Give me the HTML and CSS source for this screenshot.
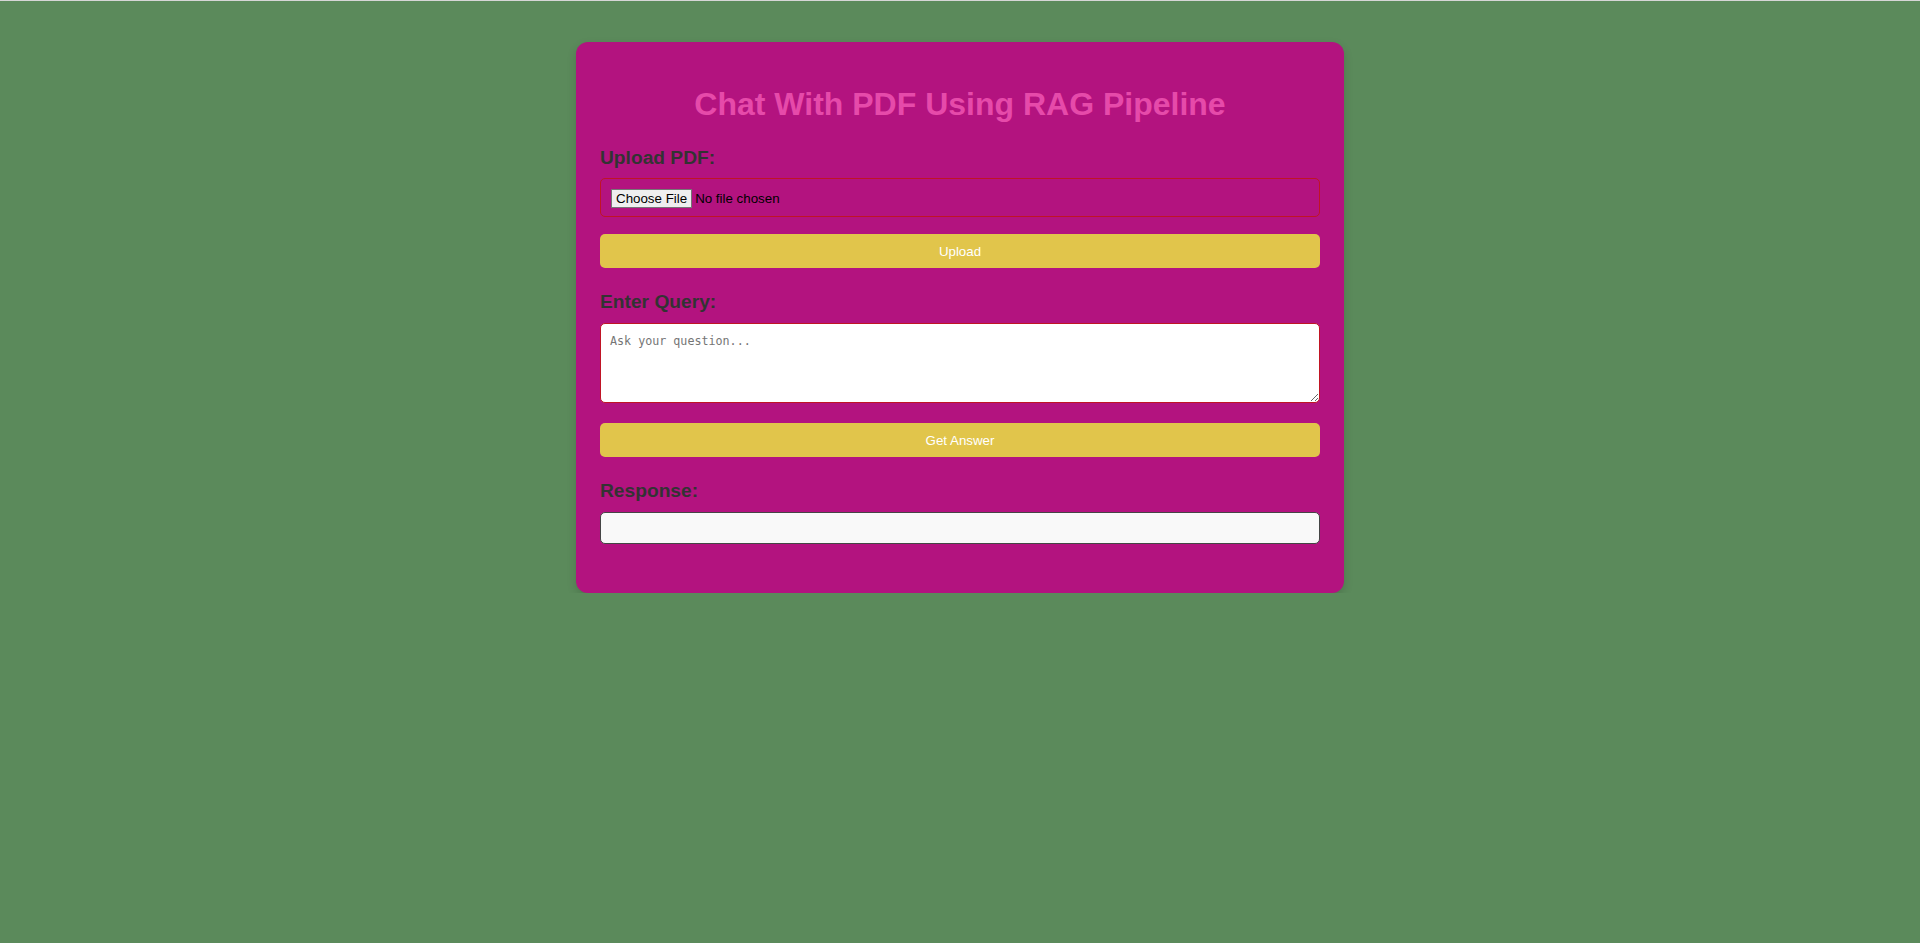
FILE: index.html
```html
<!DOCTYPE html>
<html lang="en">
<head>
<meta charset="utf-8">
<title>Chat With PDF Using RAG Pipeline</title>
<link rel="stylesheet" href="styles.css">
</head>
<body>
<div class="card">
  <h1 class="title">Chat With PDF Using RAG Pipeline</h1>

  <label class="label" for="pdf">Upload PDF:</label>
  <input class="file-input" id="pdf" type="file" accept="application/pdf">
  <button class="btn btn-upload" type="button">Upload</button>

  <label class="label label-gap" for="query">Enter Query:</label>
  <textarea class="query" id="query" placeholder="Ask your question..."></textarea>
  <button class="btn btn-answer" type="button">Get Answer</button>

  <div class="label label-gap">Response:</div>
  <div class="response"></div>
</div>
</body>
</html>
```

FILE: styles.css
```css
html {
  background: #5b8a5b;
  border-top: 1px solid #d6d6d6;
}

body {
  margin: 0;
  padding: 41px 0 0;
  font-family: "Liberation Sans", Arial, sans-serif;
}

.card {
  width: 720px;
  margin: 0 auto;
  padding: 24px 24px 49px;
  background: #b3137f;
  border-radius: 12px;
  box-shadow: 0 4px 10px rgba(0, 0, 0, 0.15);
  display: flex;
  flex-direction: column;
}

.title {
  margin: 20px 0 24px;
  font-size: 32px;
  font-weight: bold;
  line-height: normal;
  text-align: center;
  color: #e64aaa;
}

.label {
  display: block;
  font-size: 19.2px;
  font-weight: bold;
  line-height: normal;
  color: #333333;
  margin-bottom: 9px;
}

.label-gap {
  margin-top: 23px;
  margin-bottom: 10px;
}

.file-input {
  box-sizing: border-box;
  width: 100%;
  height: 39px;
  margin: 0;
  padding: 10px 10px 8px;
  border: 1px solid #c01425;
  border-radius: 5px;
  background: transparent;
  font-family: "Liberation Sans", Arial, sans-serif;
  font-size: 13.33px;
  color: #000;
}

.file-input::file-selector-button {
  font-family: "Liberation Sans", Arial, sans-serif;
  font-size: 13.33px;
  background: #efefef;
  border: 1px solid #767676;
  border-radius: 0;
  padding: 1px 4px;
  margin-right: 3px;
  color: #000;
}

.btn {
  box-sizing: border-box;
  width: 100%;
  height: 34px;
  margin: 17px 0 0;
  padding: 0 10px;
  border: none;
  border-radius: 5px;
  background: #e1c54b;
  color: #ffffff;
  font-family: "Liberation Sans", Arial, sans-serif;
  font-size: 13.33px;
  cursor: pointer;
}

.btn-answer {
  margin-top: 20px;
}

.query {
  box-sizing: border-box;
  display: block;
  width: 100%;
  height: 80px;
  margin: 0;
  padding: 10px 9px;
  border: 1px solid #c01425;
  border-radius: 5px;
  background: #ffffff;
  font-family: "DejaVu Sans Mono", monospace;
  font-size: 11.7px;
  color: #000;
  resize: vertical;
}

.query::placeholder {
  color: #757575;
}

.response {
  box-sizing: border-box;
  height: 32px;
  border: 1px solid #454545;
  border-radius: 5px;
  background: #f9f9f9;
}
```
